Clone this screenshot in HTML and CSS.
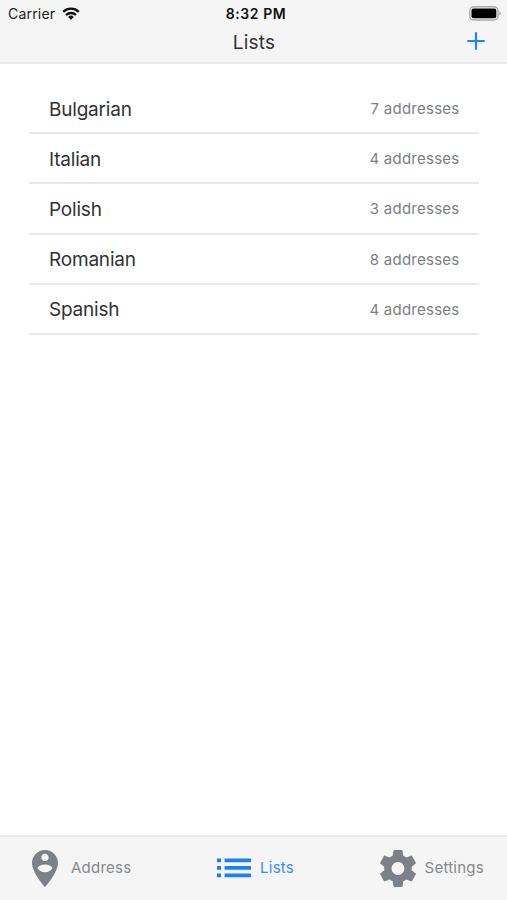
FILE: index.html
```html
<!DOCTYPE html>
<html lang="en">
<head>
<meta charset="utf-8">
<title>Lists</title>
<link rel="stylesheet" href="styles.css">
</head>
<body>
<div class="screen">
  <header class="header">
    <div class="status">
      <div class="carrier"><span class="carrier-name">Carrier</span>
        <svg class="wifi" viewBox="0 0 18 13"><g fill="none" stroke="#111" stroke-width="2.3"><path d="M1.2 4.8a11.2 11.2 0 0 1 15.6 0"/><path d="M4 8a7.2 7.2 0 0 1 10 0"/></g><path d="M9 12.7 6.2 9.9a4 4 0 0 1 5.6 0z" fill="#111"/></svg>
      </div>
      <span class="time">8:32 PM</span>
      <svg class="battery" viewBox="0 0 32 15"><rect x=".8" y=".8" width="28.2" height="13.2" rx="4" fill="#f5f5f5" stroke="#aaa" stroke-width="1.4"/><rect x="2.5" y="2.6" width="24.8" height="9.6" rx="2" fill="#000"/><path d="M30.3 5.3q1.5.5 1.5 2.1t-1.5 2.1z" fill="#aaa"/></svg>
    </div>
    <div class="nav">
      <h1 class="title">Lists</h1>
      <svg class="add" viewBox="0 0 18 18"><path d="M9 .3v17.4M.3 9h17.4" stroke="#1c86f8" stroke-width="2.2"/></svg>
    </div>
  </header>
  <main class="content">
    <ul class="lists">
      <li class="row"><span class="name">Bulgarian</span><span class="count">7 addresses</span></li>
      <li class="row"><span class="name">Italian</span><span class="count">4 addresses</span></li>
      <li class="row"><span class="name">Polish</span><span class="count">3 addresses</span></li>
      <li class="row"><span class="name">Romanian</span><span class="count">8 addresses</span></li>
      <li class="row"><span class="name">Spanish</span><span class="count">4 addresses</span></li>
    </ul>
  </main>
  <nav class="tabs">
    <div class="tab"><svg class="icon pin" viewBox="5 2 14 20" preserveAspectRatio="none"><path d="M12 2C8.14 2 5 5.14 5 9c0 5.25 7 13 7 13s7-7.75 7-13c0-3.86-3.14-7-7-7zm0 2c1.1 0 2 .9 2 2 0 1.11-.9 2-2 2s-2-.89-2-2c0-1.1.9-2 2-2zm0 10c-1.67 0-3.14-.85-4-2.15.02-1.32 2.67-2.05 4-2.05s3.98.73 4 2.05c-.86 1.3-2.33 2.15-4 2.15z"/></svg><span class="label">Address</span></div>
    <div class="tab active"><svg class="icon list" viewBox="0 0 34 20"><path d="M0 .5h4v3.8H0zM7.6.5H34v3.8H7.6zM0 8h4v3.8H0zM7.6 8H34v3.8H7.6zM0 15.5h4v3.8H0zM7.6 15.5H34v3.8H7.6z"/></svg><span class="label">Lists</span></div>
    <div class="tab"><svg class="icon gear" viewBox="2.2 2 19.6 20" preserveAspectRatio="none"><path d="M19.43 12.98c.04-.32.07-.64.07-.98s-.03-.66-.07-.98l2.11-1.65c.19-.15.24-.42.12-.64l-2-3.46c-.12-.22-.39-.3-.61-.22l-2.49 1c-.52-.4-1.08-.73-1.69-.98l-.38-2.65C14.46 2.18 14.25 2 14 2h-4c-.25 0-.46.18-.49.42l-.38 2.65c-.61.25-1.17.59-1.69.98l-2.49-1c-.23-.09-.49 0-.61.22l-2 3.46c-.13.22-.07.49.12.64l2.11 1.65c-.04.32-.07.65-.07.98s.03.66.07.98l-2.11 1.65c-.19.15-.24.42-.12.64l2 3.46c.12.22.39.3.61.22l2.49-1c.52.4 1.08.73 1.69.98l.38 2.65c.03.24.24.42.49.42h4c.25 0 .46-.18.49-.42l.38-2.65c.61-.25 1.17-.59 1.69-.98l2.49 1c.23.09.49 0 .61-.22l2-3.46c.12-.22.07-.49-.12-.64l-2.11-1.65zM12 15.5c-1.93 0-3.5-1.57-3.5-3.5s1.57-3.5 3.5-3.5 3.5 1.57 3.5 3.5-1.57 3.5-3.5 3.5z"/></svg><span class="label">Settings</span></div>
  </nav>
</div>
</body>
</html>
```
FILE: styles.css
```css
* { box-sizing: border-box; }
body { margin: 0; background: #fff; font-family: Inter, "Liberation Sans", sans-serif; }
svg { display: block; flex: none; }
.screen { height: 900px; display: flex; flex-direction: column; }
.header { height: 64px; background: #f5f5f5; border-bottom: 2px solid #e9ebec; }
.status { height: 27px; display: grid; grid-template-columns: 1fr auto 1fr; align-items: center; padding: 0 6px 0 8px; }
.carrier { display: flex; align-items: center; gap: 7px; font-size: 14px; letter-spacing: .2px; color: #222; }
.wifi { width: 18px; height: 13px; }
.time { margin-left: 3px; font-size: 14px; font-weight: 600; letter-spacing: .55px; color: #111; }
.battery { width: 32px; height: 15px; justify-self: end; }
.nav { height: 29px; display: grid; grid-template-columns: 1fr auto 1fr; align-items: center; padding: 0 22px; }
.title { grid-column: 2; margin: 0 0 0 1px; padding-top: 2px; font-size: 19px; line-height: 23px; font-weight: 400; letter-spacing: .2px; color: #333; }
.add { width: 18px; height: 18px; justify-self: end; margin-bottom: 1px; }
.content { flex: 1; padding: 20.2px 28px 0 29px; }
.lists { list-style: none; margin: 0; padding: 0; }
.row { height: 50.12px; display: flex; align-items: center; justify-content: space-between; padding: 1px 19.5px 0 20px; border-bottom: 2px solid #e7eaeb; }
.name { padding-top: 1.2px; font-size: 19px; letter-spacing: -.2px; color: #303234; }
.count { font-size: 15px; letter-spacing: .25px; color: #7c8083; }
.tabs { height: 65px; display: flex; justify-content: space-between; align-items: center; padding: 0 23px 1px 32px; background: #f5f5f5; border-top: 2px solid #e9ebec; }
.tab { display: flex; align-items: center; gap: 9px; font-size: 15px; letter-spacing: .25px; color: #85898c; }
.tab:first-child { gap: 13px; }
.tab.active { color: #3490f8; }
.label { padding-bottom: 1px; }
.icon { fill: #7b8187; }
.pin { width: 26px; height: 37px; }
.list { width: 34px; height: 20px; fill: #1c7ff2; }
.gear { width: 36px; height: 37px; }
```
